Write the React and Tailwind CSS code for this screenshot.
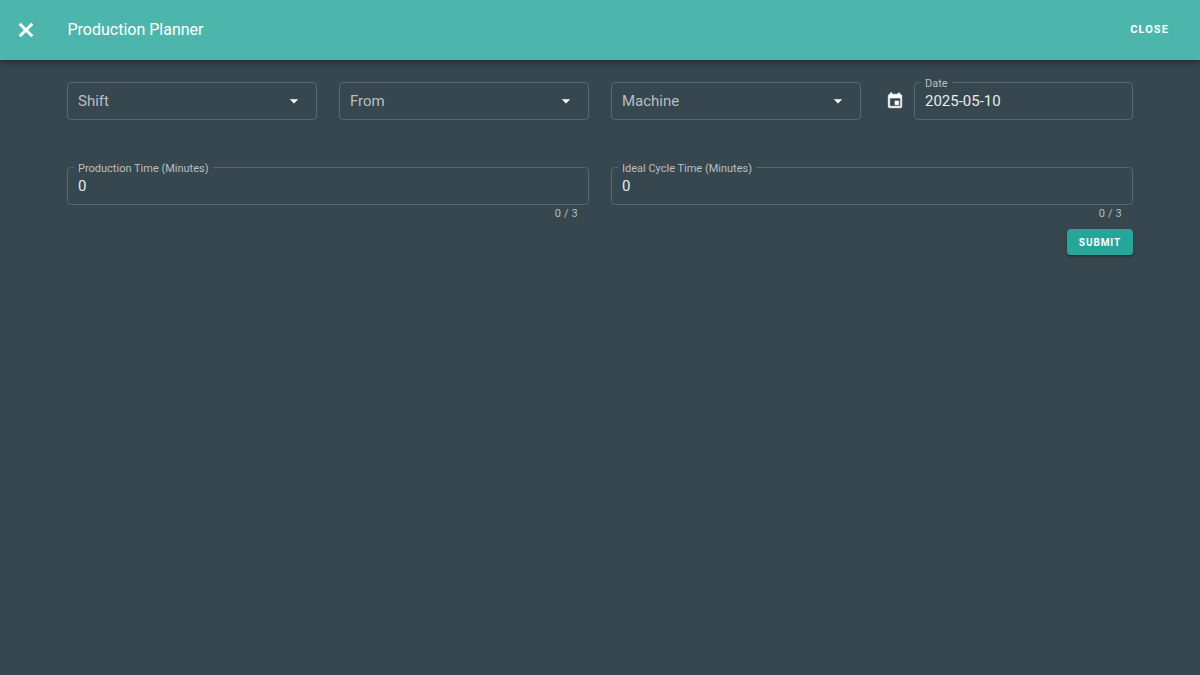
const font = { fontFamily: 'Roboto, sans-serif' };

function Arrow() {
  return (
    <svg viewBox="0 0 24 24" className="w-5 h-5 shrink-0 text-white" fill="currentColor">
      <path d="M7 10l5 5 5-5z" />
    </svg>
  );
}

function SelectField({ label }) {
  return (
    <div className="w-[250px] h-[38px] shrink-0 rounded border border-[#566870] pl-[10px] pr-[12px] flex items-center justify-between">
      <span className="text-[15px] text-[#b9bfc2]">{label}</span>
      <Arrow />
    </div>
  );
}

function Outlined({ label, value, className }) {
  return (
    <div className={`relative h-[38px] rounded border border-[#566870] pl-[10px] flex items-center ${className}`}>
      <span className="absolute left-[6px] -top-[6px] px-[4px] bg-[#37474f] text-[11px] leading-[13px] text-[#b9bfc2] whitespace-nowrap">{label}</span>
      <span className="text-[15px] text-[#e8ebec]">{value}</span>
    </div>
  );
}

function Counted({ label }) {
  return (
    <div className="flex-1">
      <Outlined label={label} value="0" className="w-full" />
      <div className="text-[11px] leading-[14px] text-[#b9bfc2] text-right pr-[11px] mt-[2px] tracking-[0.2px]">0 / 3</div>
    </div>
  );
}

export default function App() {
  return (
    <div className="w-[1200px] h-[675px] overflow-hidden bg-[#37474f]" style={font}>
      <header className="relative h-[60px] bg-[#4db6ac] flex items-center pl-[14px] pr-[31px] shadow-[0_2px_4px_-1px_rgba(0,0,0,0.2),0_4px_5px_0_rgba(0,0,0,0.14),0_1px_10px_0_rgba(0,0,0,0.12)]">
        <svg viewBox="0 0 24 24" className="w-6 h-6 text-white" fill="currentColor">
          <path d="M19.3 6.8 17.2 4.7 12 9.9 6.8 4.7 4.7 6.8 9.9 12 4.7 17.2 6.8 19.3 12 14.1 17.2 19.3 19.3 17.2 14.1 12z" />
        </svg>
        <h1 className="ml-[29.5px] text-base font-normal text-white">Production Planner</h1>
        <span className="ml-auto text-[11px] font-bold tracking-[1.1px] text-white">CLOSE</span>
      </header>

      <main className="px-[67px] pt-[22px]">
        <div className="flex gap-[22px]">
          <SelectField label="Shift" />
          <SelectField label="From" />
          <SelectField label="Machine" />
          <div className="flex-1 flex items-center">
            <svg viewBox="0 0 24 24" className="w-[18px] h-[18px] ml-[3px] mr-[10px] shrink-0 text-white" fill="currentColor" stroke="currentColor" strokeWidth="0.8">
              <path d="M19,19H5V8H19M16,1V3H8V1H6V3H5C3.89,3 3,3.89 3,5V19A2,2 0 0,0 5,21H19A2,2 0 0,0 21,19V5C21,3.89 20.1,3 19,3H18V1M17,12H12V17H17V12Z" />
            </svg>
            <Outlined label="Date" value="2025-05-10" className="flex-1" />
          </div>
        </div>

        <div className="flex gap-[22px] mt-[47px]">
          <Counted label="Production Time (Minutes)" />
          <Counted label="Ideal Cycle Time (Minutes)" />
        </div>

        <div className="flex justify-end mt-[8px]">
          <button className="w-[66px] h-[26px] rounded bg-[#26a69a] text-white text-[10px] font-bold tracking-[0.9px] shadow-[0_3px_1px_-2px_rgba(0,0,0,0.2),0_2px_2px_0_rgba(0,0,0,0.14),0_1px_5px_0_rgba(0,0,0,0.12)]">SUBMIT</button>
        </div>
      </main>
    </div>
  );
}
